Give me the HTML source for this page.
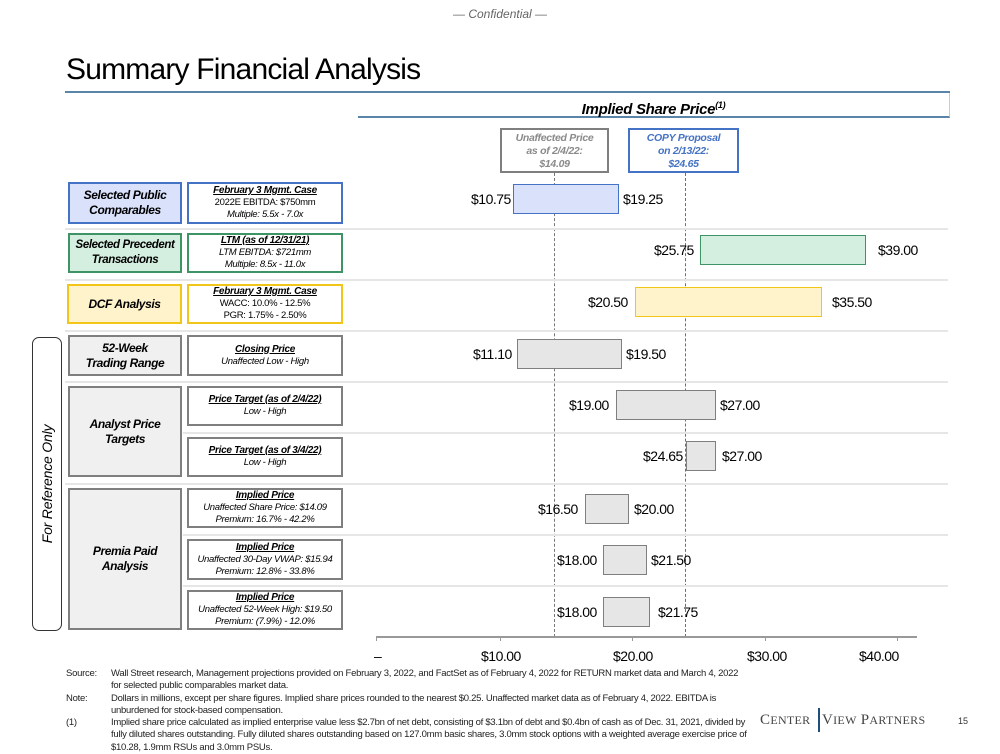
<!DOCTYPE html>
<html><head><meta charset="utf-8"><style>
*{margin:0;padding:0;box-sizing:border-box}
body{width:1000px;height:750px;position:relative;background:#fff;font-family:"Liberation Sans",sans-serif;color:#000;overflow:hidden}
.a{position:absolute}
.lb{position:absolute;display:flex;align-items:center;justify-content:center;text-align:center;font-weight:bold;font-style:italic;font-size:12px;line-height:15px;border:2px solid;letter-spacing:-0.4px;white-space:nowrap}
.md{position:absolute;display:flex;flex-direction:column;align-items:center;justify-content:center;text-align:center;font-style:italic;font-size:9.5px;line-height:12px;border:2px solid;background:#fff;letter-spacing:-0.3px;white-space:nowrap}
.md b{text-decoration:underline;font-size:10px}
.g{background:#f0f0f0;border-color:#7f7f7f}
.sep{position:absolute;height:2px;background:#e6e6e6;right:52px}
.bar{position:absolute;height:30px;border:1px solid}
.gb{background:#e6e6e6;border-color:#7f7f7f}
.v{position:absolute;font-size:14px;line-height:16px;letter-spacing:-0.5px}
.ax{position:absolute;top:648px;font-size:14px;letter-spacing:-0.5px}
.ft{position:absolute;font-size:9.5px;line-height:12.4px;color:#222;letter-spacing:-0.27px;white-space:nowrap}
</style></head><body>
<div class="a" style="left:453px;top:7px;font-size:12px;font-style:italic;color:#666">— Confidential —</div>
<div class="a" style="left:66px;top:53px;font-size:30px;letter-spacing:-0.8px">Summary Financial Analysis</div>
<div class="a" style="left:65px;top:91px;width:885px;height:2px;background:#5b85a8"></div>
<div class="a" style="left:358px;top:93px;width:592px;height:25px;border-bottom:2px solid #5b85a8;border-right:1px solid #ccc;text-align:center;font-weight:bold;font-style:italic;font-size:15px;line-height:25px;letter-spacing:-0.3px">Implied Share Price<sup style="font-size:9px">(1)</sup></div>

<div class="a" style="left:500px;top:128px;width:109px;height:45px;border:2px solid #7f7f7f;color:#8a8a8a;font-weight:bold;font-style:italic;font-size:10.5px;line-height:13px;text-align:center;padding-top:2px;letter-spacing:-0.3px">Unaffected Price<br>as of 2/4/22:<br>$14.09</div>
<div class="a" style="left:628px;top:128px;width:111px;height:45px;border:2px solid #4472c4;color:#4472c4;font-weight:bold;font-style:italic;font-size:10.5px;line-height:13px;text-align:center;padding-top:2px;letter-spacing:-0.3px">COPY Proposal<br>on 2/13/22:<br>$24.65</div>
<div class="a" style="left:554px;top:173px;height:464px;border-left:1.5px dashed #777"></div>
<div class="a" style="left:685px;top:173px;height:464px;border-left:1.5px dashed #4472c4"></div>

<div class="sep" style="left:65px;top:228px"></div>
<div class="sep" style="left:65px;top:279px"></div>
<div class="sep" style="left:65px;top:330px"></div>
<div class="sep" style="left:65px;top:381px"></div>
<div class="sep" style="left:183px;top:432px"></div>
<div class="sep" style="left:65px;top:483px"></div>
<div class="sep" style="left:183px;top:534px"></div>
<div class="sep" style="left:183px;top:585px"></div>

<div class="lb" style="left:68px;top:182px;width:114px;height:42px;background:#d9e1fb;border-color:#4472c4">Selected Public<br>Comparables</div>
<div class="md" style="left:187px;top:182px;width:156px;height:42px;border-color:#4472c4"><b>February 3 Mgmt. Case</b><span style="font-style:normal">2022E EBITDA: $750mm</span><span>Multiple: 5.5x - 7.0x</span></div>
<div class="lb" style="left:68px;top:233px;width:114px;height:40px;background:#d4efe0;border-color:#3f9466;font-size:11.5px">Selected Precedent<br>Transactions</div>
<div class="md" style="left:187px;top:233px;width:156px;height:40px;border-color:#3f9466"><b>LTM (as of 12/31/21)</b><span>LTM EBITDA: $721mm</span><span>Multiple: 8.5x - 11.0x</span></div>
<div class="lb" style="left:67px;top:284px;width:115px;height:40px;background:#fff3cc;border-color:#f2c619">DCF Analysis</div>
<div class="md" style="left:187px;top:284px;width:156px;height:40px;border-color:#f2c619"><b>February 3 Mgmt. Case</b><span style="font-style:normal">WACC: 10.0% - 12.5%</span><span style="font-style:normal">PGR: 1.75% - 2.50%</span></div>
<div class="lb g" style="left:68px;top:335px;width:114px;height:41px">52-Week<br>Trading Range</div>
<div class="md g" style="left:187px;top:335px;width:156px;height:41px;background:#fff"><b>Closing Price</b><span>Unaffected Low - High</span></div>
<div class="lb g" style="left:68px;top:386px;width:114px;height:91px">Analyst Price<br>Targets</div>
<div class="md g" style="left:187px;top:386px;width:156px;height:40px;background:#fff"><b>Price Target (as of 2/4/22)</b><span>Low - High</span></div>
<div class="md g" style="left:187px;top:437px;width:156px;height:40px;background:#fff"><b>Price Target (as of 3/4/22)</b><span>Low - High</span></div>
<div class="lb g" style="left:68px;top:488px;width:114px;height:142px">Premia Paid<br>Analysis</div>
<div class="md g" style="left:187px;top:488px;width:156px;height:40px;background:#fff"><b>Implied Price</b><span>Unaffected Share Price: $14.09</span><span>Premium: 16.7% - 42.2%</span></div>
<div class="md g" style="left:187px;top:539px;width:156px;height:41px;background:#fff"><b>Implied Price</b><span>Unaffected 30-Day VWAP: $15.94</span><span>Premium: 12.8% - 33.8%</span></div>
<div class="md g" style="left:187px;top:590px;width:156px;height:40px;background:#fff"><b>Implied Price</b><span>Unaffected 52-Week High: $19.50</span><span>Premium: (7.9%) - 12.0%</span></div>

<div class="a" style="left:32px;top:337px;width:30px;height:294px;border:1.5px solid #333;border-radius:7px"></div>
<div class="a" style="left:47px;top:484px;transform:translate(-50%,-50%) rotate(-90deg);white-space:nowrap;font-style:italic;font-size:14px;letter-spacing:-0.2px">For Reference Only</div>

<div class="bar" style="left:513px;top:184px;width:106px;background:#d9e1fb;border-color:#4472c4"></div>
<div class="v" style="left:471px;top:191px">$10.75</div><div class="v" style="left:623px;top:191px">$19.25</div>
<div class="bar" style="left:700px;top:235px;width:166px;background:#d4efe0;border-color:#3f9466"></div>
<div class="v" style="left:654px;top:242px">$25.75</div><div class="v" style="left:878px;top:242px">$39.00</div>
<div class="bar" style="left:635px;top:287px;width:187px;background:#fff3cc;border-color:#f2c619"></div>
<div class="v" style="left:588px;top:294px">$20.50</div><div class="v" style="left:832px;top:294px">$35.50</div>
<div class="bar gb" style="left:517px;top:339px;width:105px"></div>
<div class="v" style="left:473px;top:346px">$11.10</div><div class="v" style="left:626px;top:346px">$19.50</div>
<div class="bar gb" style="left:616px;top:390px;width:100px"></div>
<div class="v" style="left:569px;top:397px">$19.00</div><div class="v" style="left:720px;top:397px">$27.00</div>
<div class="bar gb" style="left:686px;top:441px;width:30px"></div>
<div class="v" style="left:643px;top:448px">$24.65</div><div class="v" style="left:722px;top:448px">$27.00</div>
<div class="bar gb" style="left:585px;top:494px;width:44px"></div>
<div class="v" style="left:538px;top:501px">$16.50</div><div class="v" style="left:634px;top:501px">$20.00</div>
<div class="bar gb" style="left:603px;top:545px;width:44px"></div>
<div class="v" style="left:557px;top:552px">$18.00</div><div class="v" style="left:651px;top:552px">$21.50</div>
<div class="bar gb" style="left:603px;top:597px;width:47px"></div>
<div class="v" style="left:557px;top:604px">$18.00</div><div class="v" style="left:658px;top:604px">$21.75</div>

<div class="a" style="left:376px;top:636px;width:541px;height:1.5px;background:#999"></div>
<div class="a" style="left:376px;top:636px;width:1px;height:5px;background:#999"></div>
<div class="a" style="left:500px;top:636px;width:1px;height:5px;background:#999"></div>
<div class="a" style="left:632px;top:636px;width:1px;height:5px;background:#999"></div>
<div class="a" style="left:765px;top:636px;width:1px;height:5px;background:#999"></div>
<div class="a" style="left:897px;top:636px;width:1px;height:5px;background:#999"></div>
<div class="ax" style="left:374px">–</div>
<div class="ax" style="left:481px">$10.00</div>
<div class="ax" style="left:613px">$20.00</div>
<div class="ax" style="left:747px">$30.00</div>
<div class="ax" style="left:859px">$40.00</div>

<div class="ft" style="left:66px;top:668px">Source:</div>
<div class="ft" style="left:111px;top:668px">Wall Street research, Management projections provided on February 3, 2022, and FactSet as of February 4, 2022 for RETURN market data and March 4, 2022<br>for selected public comparables market data.</div>
<div class="ft" style="left:66px;top:693px">Note:</div>
<div class="ft" style="left:111px;top:693px">Dollars in millions, except per share figures. Implied share prices rounded to the nearest $0.25. Unaffected market data as of February 4, 2022. EBITDA is<br>unburdened for stock-based compensation.</div>
<div class="ft" style="left:66px;top:717px">(1)</div>
<div class="ft" style="left:111px;top:717px">Implied share price calculated as implied enterprise value less $2.7bn of net debt, consisting of $3.1bn of debt and $0.4bn of cash as of Dec. 31, 2021, divided by<br>fully diluted shares outstanding. Fully diluted shares outstanding based on 127.0mm basic shares, 3.0mm stock options with a weighted average exercise price of<br>$10.28, 1.9mm RSUs and 3.0mm PSUs.</div>
<div class="a" style="left:760px;top:712px;font-family:'Liberation Serif',serif;font-size:15px;color:#444;letter-spacing:0.3px">C<span style="font-size:12px">ENTER</span></div>
<div class="a" style="left:818px;top:708px;width:1.5px;height:24px;background:#1f4e79"></div>
<div class="a" style="left:822px;top:712px;font-family:'Liberation Serif',serif;font-size:15px;color:#444;letter-spacing:0.3px">V<span style="font-size:12px">IEW</span> P<span style="font-size:12px">ARTNERS</span></div>
<div class="a" style="left:958px;top:716px;font-size:9px;color:#333">15</div>
</body></html>
